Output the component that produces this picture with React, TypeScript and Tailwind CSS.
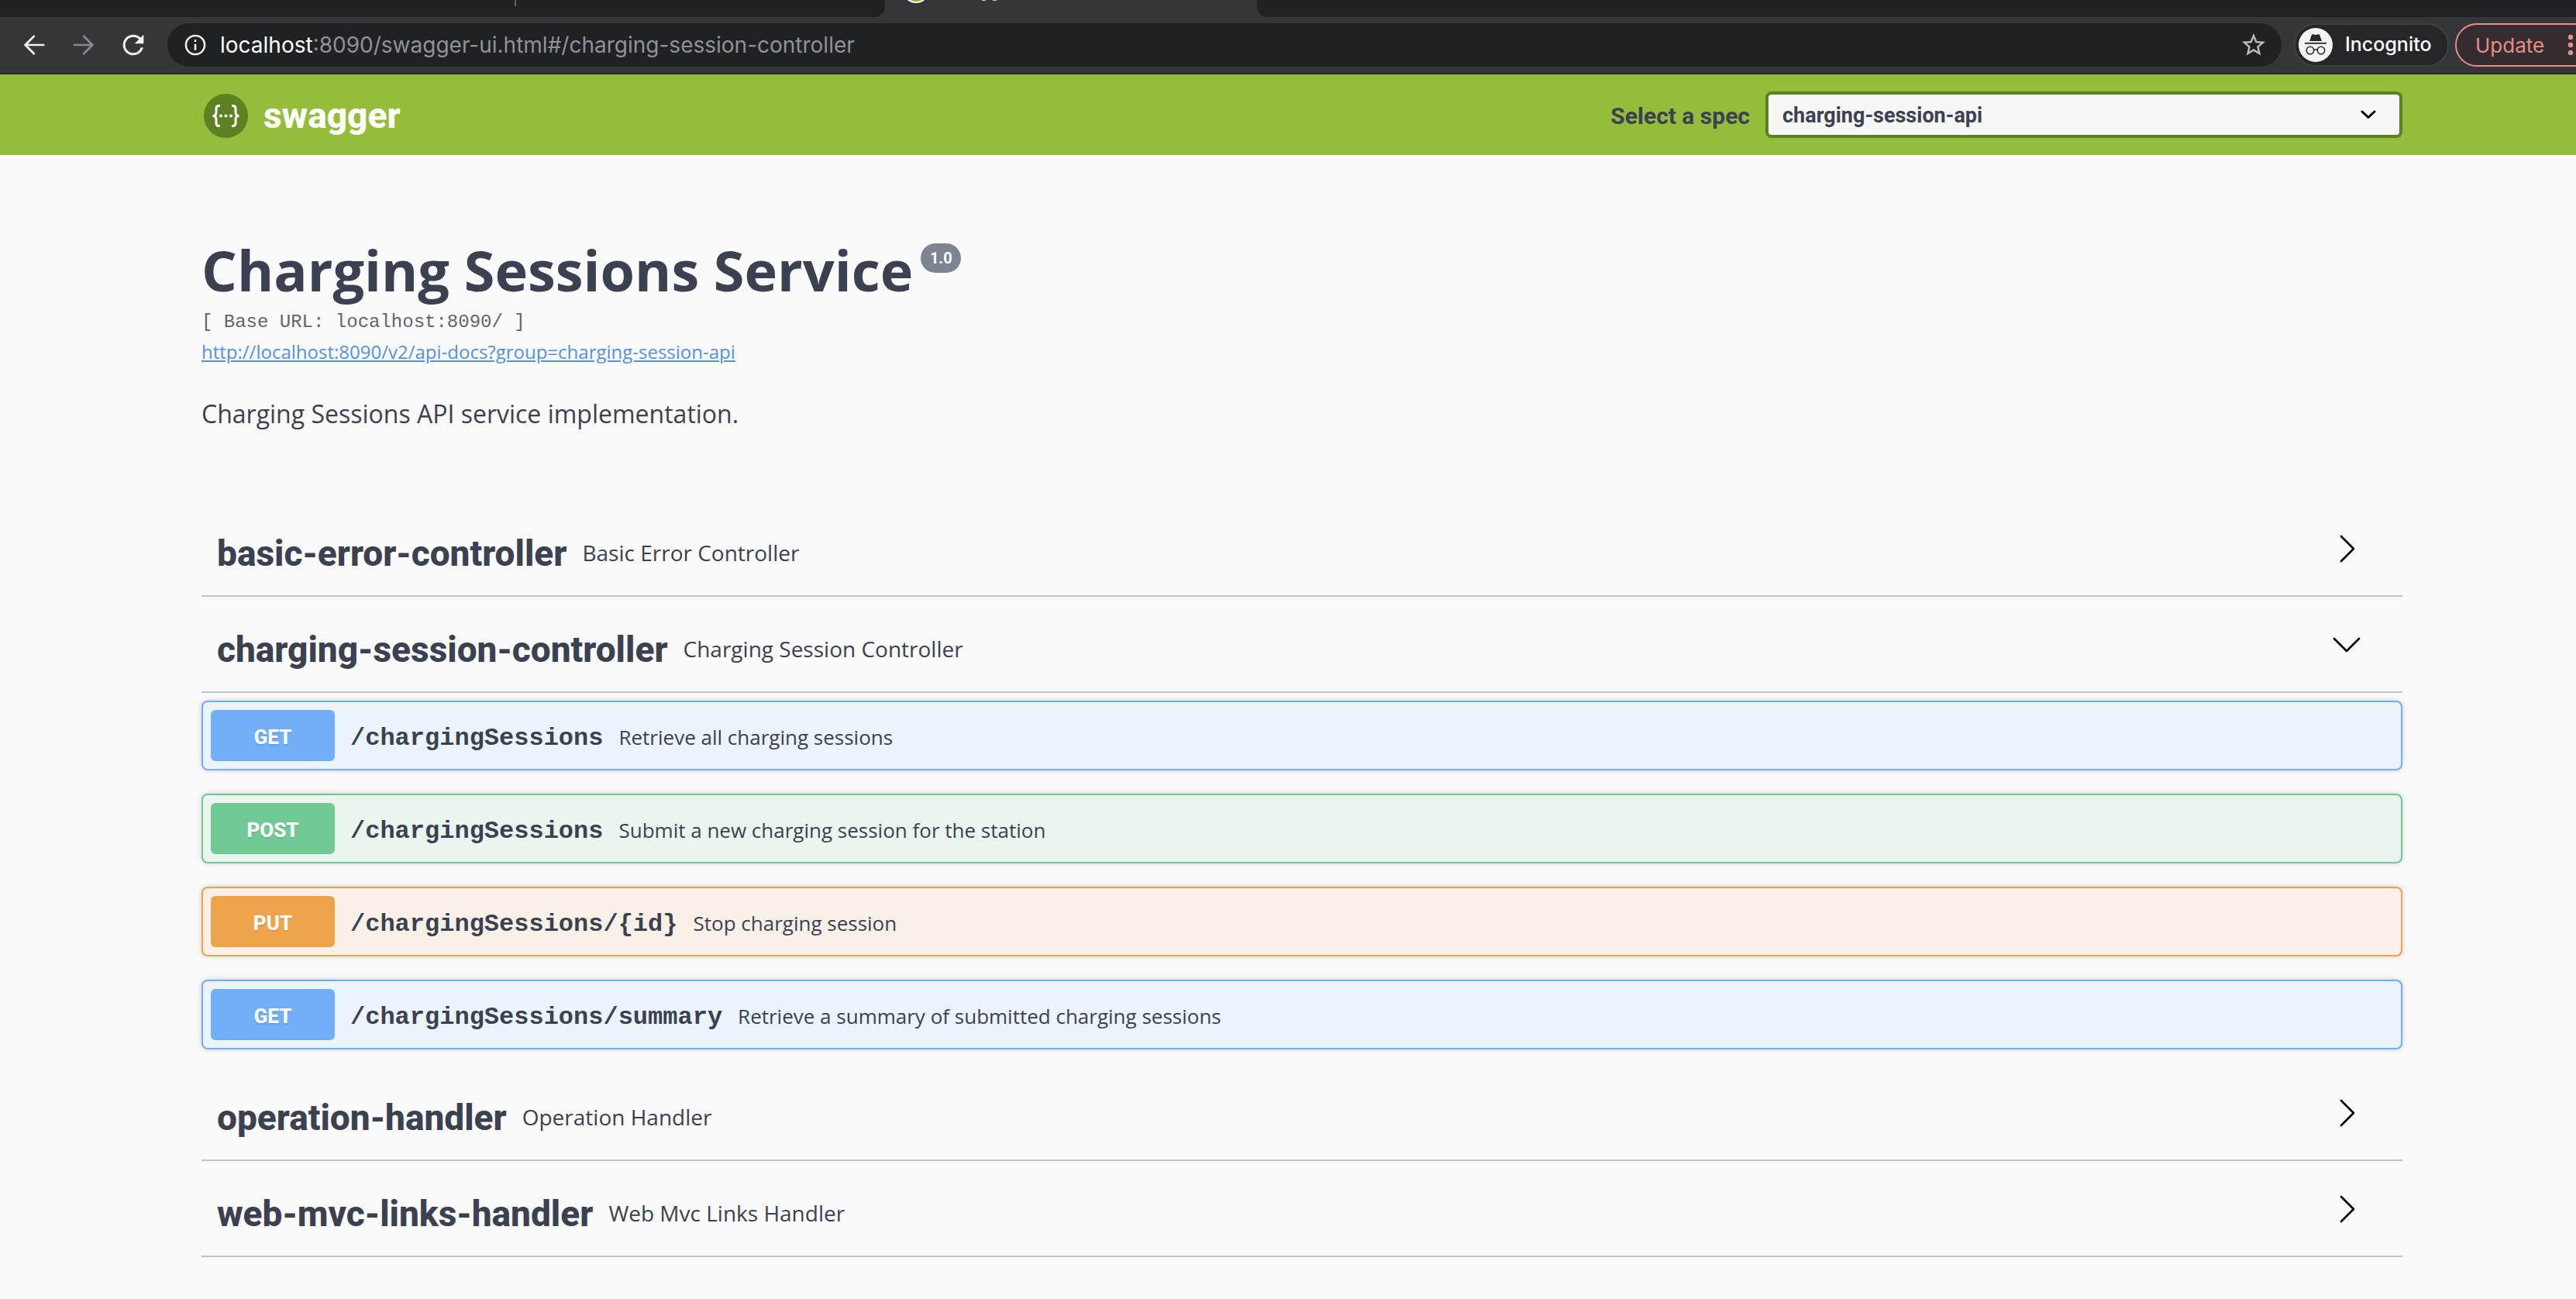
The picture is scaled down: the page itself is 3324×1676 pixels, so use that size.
import { useState } from "react";

type Method = "GET" | "POST" | "PUT";

interface Operation {
  method: Method;
  path: string;
  summary: string;
}

interface Section {
  name: string;
  description: string;
  operations: Operation[];
}

const sections: Section[] = [
  { name: "basic-error-controller", description: "Basic Error Controller", operations: [] },
  {
    name: "charging-session-controller",
    description: "Charging Session Controller",
    operations: [
      { method: "GET", path: "/chargingSessions", summary: "Retrieve all charging sessions" },
      { method: "POST", path: "/chargingSessions", summary: "Submit a new charging session for the station" },
      { method: "PUT", path: "/chargingSessions/{id}", summary: "Stop charging session" },
      { method: "GET", path: "/chargingSessions/summary", summary: "Retrieve a summary of submitted charging sessions" },
    ],
  },
  { name: "operation-handler", description: "Operation Handler", operations: [] },
  { name: "web-mvc-links-handler", description: "Web Mvc Links Handler", operations: [] },
];

const rowStyle: Record<Method, string> = {
  GET: "border-[#73aef9] bg-[#ebf3fb]",
  POST: "border-[#71c995] bg-[#ebf5ef]",
  PUT: "border-[#eea44a] bg-[#f9f1e7]",
};

const badgeStyle: Record<Method, string> = {
  GET: "bg-[#73aef9]",
  POST: "bg-[#71c995]",
  PUT: "bg-[#eea44a]",
};

function TabStrip() {
  return (
    <div className="flex h-[22px] bg-[#35363a]">
      <div className="flex w-[1142px] items-start rounded-br-[14px] bg-[#202124] pl-[664px]">
        <div className="h-2 w-0.5 bg-[#606165]" />
      </div>
      <div className="flex w-[480px] items-start pl-7">
        <svg viewBox="0 0 24 4" className="h-1 w-6" aria-hidden="true">
          <ellipse cx="12" cy="-6" rx="14" ry="10" fill="#fff" />
          <ellipse cx="12" cy="-6" rx="11" ry="8" fill="#85ac2f" />
        </svg>
        <svg viewBox="0 0 30 2" className="ml-[70px] h-0.5 w-[30px]" aria-hidden="true">
          <path d="M3 0h5M17 0h5" stroke="#c8c9cb" strokeWidth="2" />
        </svg>
      </div>
      <div className="flex-1 rounded-bl-[14px] bg-[#202124]" />
    </div>
  );
}

function IncognitoIcon() {
  return (
    <svg viewBox="0 0 44 44" className="size-11 shrink-0" aria-hidden="true">
      <circle cx="22" cy="22" r="22" fill="#f1f3f4" />
      <path d="M14.2 17 17 8.8q.4-.9 1.400-.6l3.600.9 3.600-.9q1-.3 1.400.6L30 17z" fill="#25262a" />
      <path d="M8 19.800h28" stroke="#25262a" strokeWidth="1.800" />
      <g fill="none" stroke="#25262a" strokeWidth="1.600">
        <circle cx="15" cy="29" r="4.700" />
        <circle cx="29" cy="29" r="4.700" />
        <path d="M19.700 28.400q2.300-1.400 4.600 0" />
      </g>
    </svg>
  );
}

function Toolbar() {
  return (
    <div className="flex h-[74px] items-center gap-6 border-b-2 border-[#27282b] bg-[#35363a] pl-6 text-[#eff0f2]">
      <button type="button" aria-label="Back">
        <svg viewBox="0 0 24 24" className="size-10" fill="currentColor">
          <path d="M20 11.200H7.200l5.700-5.800L11.800 4.200 4 12l7.800 7.800 1.100-1.200-5.700-5.800H20z" />
        </svg>
      </button>
      <button type="button" aria-label="Forward" className="text-[#87888b]">
        <svg viewBox="0 0 24 24" className="size-10" fill="currentColor">
          <path d="M4 11.200h12.800l-5.700-5.800 1.100-1.200L20 12l-7.800 7.800-1.100-1.200 5.700-5.800H4z" />
        </svg>
      </button>
      <button type="button" aria-label="Reload">
        <svg viewBox="0 0 24 24" className="size-10" fill="currentColor">
          <path d="M17.650 6.350A7.950 7.950 0 0 0 12 4a8 8 0 1 0 7.730 10h-1.900A6.200 6.200 0 1 1 12 5.800c1.710 0 3.240.710 4.360 1.840L13 11h7V4z" />
        </svg>
      </button>
      <div className="flex h-14 flex-1 items-center rounded-full bg-[#202124] pr-[18px] pl-5 font-[Inter,sans-serif] text-[28px]">
        <button type="button" aria-label="View site information">
          <svg viewBox="0 0 24 24" className="size-8" fill="currentColor">
            <path d="M11 7h2v2h-2zm0 4h2v6h-2zm1-9a10 10 0 1 0 0 20 10 10 0 0 0 0-20zm0 18.100a8.100 8.100 0 1 1 0-16.200 8.100 8.100 0 0 1 0 16.200z" />
          </svg>
        </button>
        <label htmlFor="address" className="ml-4 text-white">
          localhost
        </label>
        <input
          id="address"
          type="text"
          defaultValue=":8090/swagger-ui.html#/charging-session-controller"
          className="min-w-0 flex-1 bg-transparent text-[#919295] outline-none"
        />
        <button type="button" aria-label="Bookmark this tab" className="text-[#bdbec1]">
          <svg viewBox="0 0 24 24" className="size-9" fill="currentColor">
            <path d="m22 9.240-7.190-.62L12 2 9.190 8.630 2 9.240l5.460 4.730L5.820 21 12 17.270 18.180 21l-1.630-7.030zM12 15.400l-3.760 2.270 1-4.280-3.320-2.880 4.380-.38L12 6.100l1.710 4.040 4.380.38-3.320 2.880 1 4.280z" />
          </svg>
        </button>
      </div>
      <div className="-ml-2 flex gap-2">
        <button
          type="button"
          className="flex h-14 w-[200px] items-center gap-4 rounded-full border-2 border-[#3f4044] bg-[#25252a] pl-1 font-[Inter,sans-serif] text-[25px] font-medium text-white"
        >
          <IncognitoIcon />
          Incognito
        </button>
        <button
          type="button"
          className="-mr-9 flex h-14 w-48 items-center gap-[30px] rounded-full border-2 border-[#e58e86] bg-[#352c2f] pl-6 font-[Inter,sans-serif] text-[26px] text-[#e58e86]"
        >
          Update
          <svg viewBox="0 0 8 28" className="h-7 w-2 shrink-0" fill="currentColor" aria-hidden="true">
            <circle cx="4" cy="4" r="3.200" />
            <circle cx="4" cy="14" r="3.200" />
            <circle cx="4" cy="24" r="3.200" />
          </svg>
        </button>
      </div>
    </div>
  );
}

function SwaggerMark() {
  return (
    <svg viewBox="0 0 57 57" className="size-[57px]" aria-hidden="true">
      <circle cx="28.500" cy="28.500" r="28.500" fill="#5d8023" />
      <g fill="none" stroke="#fff" strokeWidth="3">
        <path d="M21 15.500h-1.500q-3.500 0-3.500 3.500v5q0 4.500-4.500 4.500 4.500 0 4.500 4.500v5q0 3.500 3.500 3.500H21" />
        <path d="M36 15.500h1.500q3.500 0 3.500 3.500v5q0 4.500 4.500 4.500-4.500 0-4.500 4.500v5q0 3.500-3.500 3.500H36" />
      </g>
      <g fill="#fff">
        <circle cx="22" cy="28.500" r="2" />
        <circle cx="28.500" cy="28.500" r="2" />
        <circle cx="35" cy="28.500" r="2" />
      </g>
    </svg>
  );
}

function TopBar() {
  return (
    <header className="flex h-[104px] items-center justify-between bg-[#95bc3a] pr-56 pl-[263px] font-[Roboto,sans-serif] font-bold">
      <a href="#" className="flex items-center gap-5 pt-0.5 text-[46px] leading-none font-extrabold text-white">
        <SwaggerMark />
        swagger
      </a>
      <div className="flex items-center gap-5">
        <label htmlFor="spec" className="pt-0.5 text-[30px]">
          Select a spec
        </label>
        <div className="relative">
          <select
            id="spec"
            className="h-[60px] w-[822px] appearance-none rounded-lg border-4 border-[#5d8023] bg-[#f7f7f7] px-[18px] pt-0.5 text-[27px]"
          >
            <option>charging-session-api</option>
          </select>
          <svg
            viewBox="0 0 20 12"
            className="pointer-events-none absolute top-6 right-[34px] h-3 w-5"
            fill="none"
            stroke="#000"
            strokeWidth="3"
            strokeLinecap="round"
            strokeLinejoin="round"
            aria-hidden="true"
          >
            <path d="m2 2 8 7.500L18 2" />
          </svg>
        </div>
      </div>
    </header>
  );
}

function Info() {
  return (
    <section>
      <div className="flex items-start gap-2.5">
        <h1 className="text-[72px] leading-[96px] font-bold">Charging Sessions Service</h1>
        <span className="mt-3.5 flex h-[38px] w-[52px] items-center justify-center rounded-full bg-[#7d8492] font-[Roboto,sans-serif] text-xl font-bold text-white">
          1.0
        </span>
      </div>
      <p className="font-['Liberation_Mono',monospace] text-2xl leading-10 text-[#5f6472]">
        [ Base URL: localhost:8090/ ]
      </p>
      <a
        href="http://localhost:8090/v2/api-docs?group=charging-session-api"
        className="text-2xl leading-9 text-[#5592df] underline"
      >
        http://localhost:8090/v2/api-docs?group=charging-session-api
      </a>
      <p className="mt-10 text-[32px] leading-11">Charging Sessions API service implementation.</p>
    </section>
  );
}

function OperationRow({ method, path, summary }: Operation) {
  return (
    <button
      type="button"
      className={`flex h-[90px] w-full items-center gap-5 rounded-lg border-2 px-2.5 text-left shadow-[0_0_6px_rgba(0,0,0,0.19)] ${rowStyle[method]}`}
    >
      <span
        className={`flex h-[66px] w-40 items-center justify-center rounded-md pt-1 font-[Roboto,sans-serif] text-[26px] font-extrabold text-white [text-shadow:0_2px_0_rgba(0,0,0,0.1)] ${badgeStyle[method]}`}
      >
        {method}
      </span>
      <span className="pt-2 font-['Liberation_Mono',monospace] text-[32px] font-bold">{path}</span>
      <span className="pt-1 text-[26px]">{summary}</span>
    </button>
  );
}

function TagSection({ section, startOpen }: { section: Section; startOpen: boolean }) {
  const [open, setOpen] = useState(startOpen);
  return (
    <section>
      <h2>
        <button
          type="button"
          aria-expanded={open}
          onClick={() => setOpen(!open)}
          className="flex h-[124px] w-full items-center border-b-2 border-[#c2c3c8] pr-[52px] pl-5 text-left"
        >
          <span className="pt-3.5 font-[Roboto,sans-serif] text-[46px] leading-none font-extrabold">{section.name}</span>
          <span className="flex-1 pt-3 pl-5 text-[28px]">{section.description}</span>
          <svg
            viewBox="0 0 40 40"
            className="size-10"
            fill="none"
            stroke="#000"
            strokeWidth="2.600"
            strokeLinecap="round"
            strokeLinejoin="round"
            aria-hidden="true"
          >
            {open ? <path d="m4 13 16 16 16-16" /> : <path d="m13 5 16 16-16 16" />}
          </svg>
        </button>
      </h2>
      {open && section.operations.length > 0 && (
        <div className="flex flex-col gap-[30px] pt-2.5 pb-5">
          {section.operations.map((op) => (
            <OperationRow key={op.method + op.path} {...op} />
          ))}
        </div>
      )}
    </section>
  );
}

export default function App() {
  return (
    <div className="min-h-screen overflow-hidden bg-[#fafafa] font-['Open_Sans',sans-serif] text-[#3b4151]">
      <TabStrip />
      <Toolbar />
      <TopBar />
      <main className="pt-[100px] pr-56 pl-[260px]">
        <Info />
        <div className="pt-[90px]">
          {sections.map((s) => (
            <TagSection key={s.name} section={s} startOpen={s.operations.length > 0} />
          ))}
        </div>
      </main>
    </div>
  );
}
